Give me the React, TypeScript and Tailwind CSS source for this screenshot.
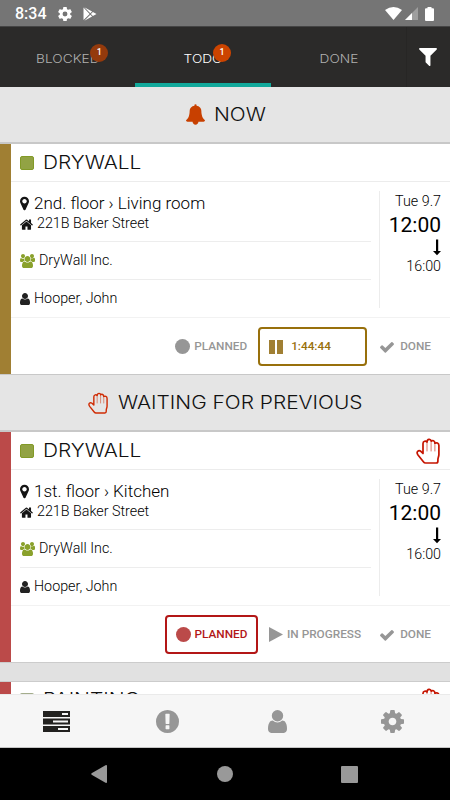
import React from 'react';

const paths = {
  filter: 'M1595 295q17 41-14 70l-493 493v742q0 42-39 59-13 5-25 5-27 0-45-19l-256-256q-19-19-19-45v-486l-493-493q-31-29-14-70 17-39 59-39h1280q42 0 59 39z',
  bell: 'M1728 1408q0 52-38 90t-90 38h-448q0 106-75 181t-181 75-181-75-75-181h-448q-52 0-90-38t-38-90q50-42 91-88t85-119.5 74.5-158.5 50-206 19.5-260q0-152 117-282.5t307-158.5q-8-19-8-39 0-40 28-68t68-28 68 28 28 68q0 20-8 39 190 28 307 158.5t117 282.5q0 139 19.5 260t50 206 74.5 158.5 85 119.5 91 88z',
  marker: 'M1152 640q0-106-75-181t-181-75-181 75-75 181 75 181 181 75 181-75 75-181zm256 0q0 109-33 179l-364 774q-16 33-47.5 52t-67.5 19-67.5-19-46.5-52l-365-774q-33-70-33-179 0-212 150-362t362-150 362 150 150 362z',
  home: 'M1472 992v480q0 26-19 45t-45 19h-384v-384h-256v384h-384q-26 0-45-19t-19-45v-480q0-1 .5-3t.5-3l575-474 575 474q1 2 1 6zm223-69l-62 74q-8 9-21 11h-3q-13 0-21-7l-692-577-692 577q-12 8-24 7-13-2-21-11l-62-74q-8-10-7-23.5t11-21.5l719-599q32-26 76-26t76 26l244 204v-195q0-14 9-23t23-9h192q14 0 23 9t9 23v408l219 182q10 8 11 21.5t-7 23.5z',
  check: 'M1671 566q0 40-28 68l-724 724-136 136q-28 28-68 28t-68-28l-136-136-362-362q-28-28-28-68t28-68l136-136q28-28 68-28t68 28l294 295 656-657q28-28 68-28t68 28l136 136q28 28 28 68z',
  user: 'M1536 1399q0 109-62.5 187t-150.5 78h-854q-88 0-150.5-78t-62.5-187q0-85 8.5-160.5t31.5-152 58.5-131 94-89 134.5-34.5q131 128 313 128t313-128q76 0 134.5 34.5t94 89 58.5 131 31.5 152 8.5 160.5zm-256-887q0 159-112.5 271.5t-271.5 112.5-271.5-112.5-112.5-271.5 112.5-271.5 271.5-112.5 271.5 112.5 112.5 271.5z',
  users: 'M593 896q-162 5-265 128h-134q-82 0-138-40.5t-56-118.5q0-353 124-353 6 0 43.5 21t97.5 42.5 119 21.5q67 0 133-23-5 37-5 66 0 159 81 256zm1071 637q0 120-73 189.5t-194 69.5h-874q-121 0-194-69.5t-73-189.5q0-53 3.5-103.5t14-109 26.5-108.5 43-97.5 62-81 85.5-53.5 111.5-20q10 0 43 21.5t73 48 107 48 135 21.5 135-21.5 107-48 73-48 43-21.5q61 0 111.5 20t85.5 53.5 62 81 43 97.5 26.5 108.5 14 109 3.5 103.5zm-1024-1277q0 106-75 181t-181 75-181-75-75-181 75-181 181-75 181 75 75 181zm704 384q0 159-112.5 271.5t-271.5 112.5-271.5-112.5-112.5-271.5 112.5-271.5 271.5-112.5 271.5 112.5 112.5 271.5zm576 225q0 78-56 118.5t-138 40.5h-134q-103-123-265-128 90-135 90-294 0-29-5-66 66 23 133 23 59 0 119-21.5t97.5-42.5 43.5-21q124 0 124 353zm-128-609q0 106-75 181t-181 75-181-75-75-181 75-181 181-75 181 75 75 181z',
  gear: 'M1152 896q0-106-75-181t-181-75-181 75-75 181 75 181 181 75 181-75 75-181zm512-109v222q0 12-8 23t-20 13l-185 28q-19 54-39 91 35 50 107 138 10 12 10 25t-9 23q-27 37-99 108t-94 71q-12 0-26-9l-138-108q-44 23-91 38-16 136-29 186-7 28-36 28h-222q-14 0-24.5-8.5t-11.5-21.5l-28-184q-49-16-90-37l-141 107q-10 9-25 9-14 0-25-11-126-114-165-168-7-10-7-23 0-12 8-23 15-21 51-66.5t54-70.5q-27-50-41-99l-183-27q-13-2-21-12.5t-8-23.5v-222q0-12 8-23t19-13l186-28q14-46 39-92-40-57-107-138-10-12-10-24 0-10 9-23 26-36 98.5-107.5t94.5-71.5q13 0 26 10l138 107q44-23 91-38 16-136 29-186 7-28 36-28h222q14 0 24.5 8.5t11.5 21.5l28 184q49 16 90 37l142-107q9-9 24-9 13 0 25 10 129 119 165 170 7 8 7 22 0 12-8 23-15 21-51 66.5t-54 70.5q26 50 41 98l183 28q13 2 21 12.5t8 23.5z',
  alert: 'M896 128q209 0 385.5 103t279.5 279.5 103 385.5-103 385.5-279.5 279.5-385.5 103-385.5-103-279.5-279.5-103-385.5 103-385.5 279.5-279.5 385.5-103zm128 1247v-190q0-14-9-23.5t-22-9.5h-192q-13 0-23 10t-10 23v190q0 13 10 23t23 10h192q13 0 22-9.5t9-23.5zm-2-344l18-621q0-12-10-18-10-8-24-8h-220q-14 0-24 8-10 6-10 18l17 621q0 10 10 17.5t24 7.5h185q14 0 23.5-7.5t10.5-17.5z',
};

interface IconProps {
  name: keyof typeof paths;
  className: string;
  viewBox?: string;
}

const Icon: React.FC<IconProps> = ({ name, className, viewBox = '0 0 1792 1792' }) => (
  <svg viewBox={viewBox} fill="currentColor" className={`shrink-0 ${className}`}>
    <path d={paths[name]} />
  </svg>
);

const Hand: React.FC<{ className: string }> = ({ className }) => (
  <svg viewBox="0 0 24 26" fill="none" stroke="currentColor" className={`shrink-0 ${className}`} strokeLinejoin="round" strokeLinecap="round">
    <path strokeWidth="1.7" d="M7 15.500V5.600C7 3 10 2.500 11 4C11.200.700 14.800.700 15.200 3.200C16.400 2 18.900 2.600 18.900 5.200C20.500 4.300 22.900 5 22.900 7.500V16.500C22.900 18.500 21.900 20 21.900 21.500V23C21.900 24.400 21.300 25 20.300 25H9.600C8.500 25 7.900 24.500 7.400 23.800L2 17C-.300 13.800 2.600 11.800 4.800 13.300Z" />
    <path strokeWidth=".6" d="M11 4v9M15.100 3.500V13M18.900 5v8" />
  </svg>
);

// Light wide caps used by section and card titles
const Title: React.FC<{ text: string; width: string }> = ({ text, width }) => (
  <span className={`${width} block pt-px`}>
    <span className="inline-block origin-left scale-x-[1.16] text-[18px] leading-6 font-light whitespace-nowrap text-[#111] font-[Inter,sans-serif]">{text}</span>
  </span>
);

const Tab: React.FC<{ label: string; width: string; badge?: string; active?: boolean }> = ({ label, width, badge, active }) => (
  <div className={`h-full flex items-center justify-center border-b-4 pt-2 ${width} ${active ? 'border-[#12a99b] text-white' : 'border-b-transparent text-[#b0b0af]'}`}>
    <div className="relative">
      <span className="block scale-x-[1.14] text-[12px] font-light leading-5 font-[Inter,sans-serif]">{label}</span>
      {badge && (
        <span className={`absolute -top-[5px] flex size-[18px] items-center justify-center rounded-full text-[9px] font-medium text-white ${active ? '-right-[11px] bg-[#cc4400]' : '-right-[13px] bg-[#943a0c]'}`}>
          {badge}
        </span>
      )}
    </div>
  </div>
);

const Section: React.FC<{ children: React.ReactNode; className: string }> = ({ children, className }) => (
  <div className={`flex shrink-0 items-center border-b-2 border-[#c8c8c8] bg-[#e5e5e5] ${className}`}>{children}</div>
);

const Card: React.FC<{ place: string; waiting?: boolean; children: React.ReactNode }> = ({ place, waiting, children }) => (
  <div className={`h-[230px] shrink-0 border-l-[11px] bg-white ${waiting ? 'border-[#bb4a49]' : 'border-[#a07f33]'}`}>
    <div className="flex h-[38px] items-center border-b border-[#ececec] pl-[9px] pr-[10px]">
      <span className="mr-[9px] size-[14px] rounded-[2px] border border-[#829a27] bg-[#92a344]" />
      <Title text="DRYWALL" width="w-[100px]" />
      {waiting && <Hand className="ml-auto h-[26px] w-6 text-[#c51400]" />}
    </div>
    <div className="flex h-[136px] border-b border-[#f2f2f2] pl-[9px]">
      <div className="w-[351px] text-[14.300px] font-light text-black">
        <div className="h-[60px] border-b border-[#ededed] pt-[11px]">
          <div className="flex h-[21px] items-center">
            <Icon name="marker" viewBox="384 100 1024 1592" className="mr-[5px] h-[15px] w-[9px] text-[#151515]" />
            <span className="pt-px text-[17px]">{place}</span>
          </div>
          <div className="flex h-5 items-center">
            <Icon name="home" viewBox="80 220 1640 1330" className="mr-1 h-[11px] w-[13px] text-[#151515]" />
            <span>221B Baker Street</span>
          </div>
        </div>
        <div className="flex h-[38px] items-center border-b border-[#ededed] pt-px">
          <Icon name="users" viewBox="0 0 1920 1792" className="mr-1 h-[14px] w-[15px] text-[#8aa12c]" />
          <span>DryWall Inc.</span>
        </div>
        <div className="flex h-[37px] items-center pt-px">
          <Icon name="user" viewBox="256 128 1280 1536" className="mr-1 h-3 w-[10px] text-[#222]" />
          <span>Hooper, John</span>
        </div>
      </div>
      <div className="my-[9px] ml-2 flex flex-1 flex-col items-end border-l border-[#ececec] pr-[9px] text-[14.300px] font-light text-black">
        <span className="leading-5">Tue 9.7</span>
        <span className="text-[21px] leading-[28px] font-normal">12:00</span>
        <svg viewBox="0 0 8 17" className="h-[17px] w-2" fill="currentColor">
          <path d="M3 .5h2.200v11.500H8L4 16.300 0 12h3z" />
        </svg>
        <span className="leading-5">16:00</span>
      </div>
    </div>
    <div className="flex h-14 items-center justify-end pr-[19px] pt-px text-[11.800px] font-medium text-[#969696]">
      {children}
    </div>
  </div>
);

const Done: React.FC = () => (
  <>
    <Icon name="check" viewBox="121 270 1550 1252" className="mr-[6px] h-[12px] w-[14px]" />
    DONE
  </>
);

export default function App() {
  return (
    <div className="flex h-[800px] w-[450px] flex-col overflow-hidden bg-[#e5e5e5] font-[Roboto,sans-serif]">
      <div className="flex h-[26px] shrink-0 items-center bg-[#757575] pl-[15px] pr-[16px] pt-px text-white">
        <span className="w-[43px] text-[16px] font-medium">8:34</span>
        <svg viewBox="2 2 20 20" className="size-[14px]" fill="currentColor">
          <path d="M19.430 12.980a7.800 7.800 0 0 0 0-1.960l2.110-1.650a.5.5 0 0 0 .12-.64l-2-3.460a.5.5 0 0 0-.61-.22l-2.490 1a7.300 7.300 0 0 0-1.690-.98l-.38-2.650A.49.49 0 0 0 14 2h-4a.49.49 0 0 0-.49.420l-.38 2.650c-.61.250-1.170.590-1.690.980l-2.490-1a.5.5 0 0 0-.61.220l-2 3.460a.5.5 0 0 0 .12.640l2.110 1.650a7.800 7.800 0 0 0 0 1.960l-2.110 1.650a.5.5 0 0 0-.12.640l2 3.460c.12.220.39.300.61.220l2.490-1c.52.400 1.080.730 1.690.980l.38 2.650c.03.240.240.420.490.420h4c.25 0 .46-.18.49-.42l.38-2.650c.61-.25 1.170-.59 1.690-.98l2.490 1c.23.090.49 0 .61-.22l2-3.460a.5.5 0 0 0-.12-.64zM12 15.500a3.500 3.500 0 1 1 0-7 3.500 3.500 0 0 1 0 7z" />
        </svg>
        <svg viewBox="0 0 14 14" className="ml-[11px] size-[14px]" fill="currentColor">
          <path d="M.5.500v12.600L6.600 7zM1.300.200 7.300 6.300l1.800-1.800zM9.900 4.900 7.900 7l2 2L13.500 7zM1.300 13.700l7.800-4.300-1.800-1.700z" />
        </svg>
        <svg viewBox="0 0 17 13" className="ml-auto h-[13px] w-[17px]" fill="currentColor">
          <path d="M0 3Q8.500-3 17 3L8.500 13z" />
        </svg>
        <svg viewBox="0 0 13 13" className="ml-[3px] size-[13px]" fill="currentColor">
          <path d="M13 0v13H0z" opacity=".3" />
          <path d="M7 6v7H0z" />
        </svg>
        <svg viewBox="0 0 9 14" className="ml-[7px] h-[14px] w-[9px]" fill="currentColor">
          <path d="M2.500 0h4v1.300H8a1 1 0 0 1 1 1V13a1 1 0 0 1-1 1H1a1 1 0 0 1-1-1V2.300a1 1 0 0 1 1-1h1.500z" />
        </svg>
      </div>

      <div className="flex h-[61px] shrink-0 border-t border-[#444] bg-[#2b2a29]">
        <Tab label="BLOCKED" width="w-[135px]" badge="1" />
        <Tab label="TODO" width="w-[136px]" badge="1" active />
        <Tab label="DONE" width="w-[135px]" />
        <div className="flex flex-1 items-center justify-center border-l border-[#272625] pr-px text-white">
          <Icon name="filter" viewBox="190 256 1412 1408" className="size-[18px]" />
        </div>
      </div>

      <main className="flex h-[607px] shrink-0 flex-col overflow-hidden">
        <Section className="h-[57px] pl-[186px]">
          <Icon name="bell" viewBox="64 0 1664 1792" className="mr-[9px] h-[21px] w-[19px] text-[#c84000]" />
          <Title text="NOW" width="w-[52px]" />
        </Section>
        <Card place="2nd. floor › Living room">
          <span className="mr-1 size-[15px] rounded-full bg-[#969696]" />
          PLANNED
          <span className="ml-[11px] mr-[13px] flex h-[39px] w-[109px] items-center rounded-[4px] border-2 border-[#98700c] pl-[9px] text-[#98700c]">
            <span className="mr-2 flex gap-[2px]">
              <span className="h-[14px] w-[6px] bg-[#a07f33]" />
              <span className="h-[14px] w-[6px] bg-[#a07f33]" />
            </span>
            1:44:44
          </span>
          <Done />
        </Card>
        <Section className="h-[58px] border-t pl-[88px]">
          <Hand className="mr-[10px] h-[22px] w-5 text-[#cf2c05]" />
          <Title text="WAITING FOR PREVIOUS" width="w-[244px]" />
        </Section>
        <Card place="1st. floor › Kitchen" waiting>
          <span className="mr-[11px] flex h-[39px] w-[93px] items-center justify-center rounded-[4px] border-2 border-[#b31717] text-[#b31717]">
            <span className="mr-1 size-[15px] rounded-full bg-[#bb4a49]" />
            PLANNED
          </span>
          <svg viewBox="0 0 14 15" className="mr-1 h-[15px] w-[14px]" fill="currentColor">
            <path d="M0 0l14 7.500L0 15z" />
          </svg>
          <span className="mr-[19px]">IN PROGRESS</span>
          <Done />
        </Card>
        <div className="h-[20px] shrink-0 border-y border-[#cccccc] bg-[#e1e1e1]" />
        <div className="flex h-[38px] shrink-0 items-center border-l-[11px] border-[#bb4a49] bg-white pl-[9px] pr-[10px]">
          <span className="mr-[9px] mb-[2px] size-[14px] rounded-[2px] bg-[#a4ad8c]" />
          <span className="mb-[3px]">
            <Title text="PAINTING" width="w-[100px]" />
          </span>
          <Hand className="ml-auto h-[26px] w-6 text-[#c51400]" />
        </div>
      </main>

      <nav className="flex h-[54px] shrink-0 items-center border-t border-b border-t-[#eaeaea] border-b-[#c4c4c4] bg-[#f6f6f6] text-[#969696]">
        <div className="flex w-[113px] justify-center">
          <svg viewBox="0 0 27 21" className="h-[21px] w-[27px] text-[#22211f]">
            <path fill="currentColor" d="M0 0h27v6H0zM0 7.500h27v6H0zM0 15h27v6H0z" />
            <path fill="#f6f6f6" d="M19 2h6v2h-6zM10 9.500h15v2H10zM15 17h10v2H15z" />
          </svg>
        </div>
        <div className="flex w-[108px] justify-center">
          <Icon name="alert" viewBox="128 128 1536 1536" className="size-[23px]" />
        </div>
        <div className="flex w-[113px] justify-center">
          <Icon name="user" viewBox="256 128 1280 1536" className="h-[23px] w-[19px]" />
        </div>
        <div className="flex w-[116px] justify-center">
          <Icon name="gear" viewBox="128 128 1536 1536" className="size-[23px]" />
        </div>
      </nav>

      <div className="flex h-[52px] shrink-0 items-center bg-black pl-[91px] text-[#999]">
        <svg viewBox="0 0 16 18" className="h-[18px] w-4" fill="currentColor">
          <path d="M14.500.200Q16-.3 16 1v16q0 1.300-1.500.8L.6 9.700Q0 9 .6 8.300z" />
        </svg>
        <span className="ml-[110px] size-4 rounded-full bg-[#999]" />
        <span className="ml-[108px] size-[17px] rounded-[1px] bg-[#999]" />
      </div>
    </div>
  );
}
